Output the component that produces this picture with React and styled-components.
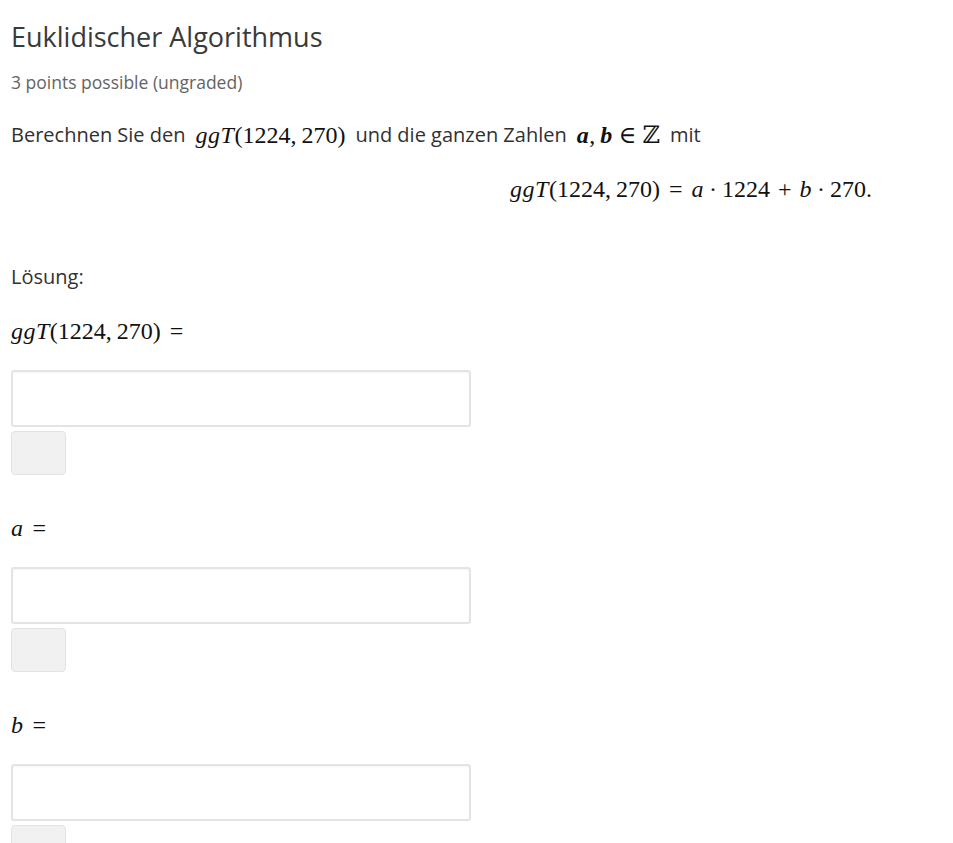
import React from "react";
import styled, { createGlobalStyle } from "styled-components";

const GlobalStyle = createGlobalStyle`
  body {
    margin: 0;
    background: #fff;
    font-family: "Open Sans", "Noto Sans", sans-serif;
    color: #313131;
  }
`;

const Page = styled.div`
  padding: 20px 0 0 11px;
`;

const Title = styled.h2`
  margin: 0;
  font-size: 27px;
  font-weight: 400;
  line-height: 34px;
  color: #3a3a3a;
`;

const Points = styled.div`
  margin-top: 16px;
  font-size: 17.5px;
  line-height: 24px;
  color: #646464;
`;

const Text = styled.p`
  margin: ${(p) => p.margin || "0"};
  font-size: 20px;
  line-height: ${(p) => p.lh || 30}px;
  display: flex;
  align-items: center;
`;

const Math = styled.span`
  font-family: "Liberation Serif", "DejaVu Serif", serif;
  font-size: ${(p) => p.size || 24}px;
  margin: 0 ${(p) => p.gap || 0}px;
  white-space: nowrap;
  color: #111;
`;

const V = styled.i`
  font-style: italic;
  font-weight: ${(p) => (p.bold ? 700 : 400)};
  letter-spacing: 0.5px;
`;

const Op = styled.span`
  margin: 0 ${(p) => p.space || 6}px;
`;

const Comma = styled.span`
  margin-right: 5px;
`;

const Display = styled.div`
  display: flex;
  justify-content: flex-end;
  padding-right: 81px;
  margin-top: 19px;
  line-height: 40px;
`;

const Label = styled.div`
  margin-top: ${(p) => p.top || 0}px;
  height: 40px;
  display: flex;
  align-items: center;
`;

const Field = styled.div`
  margin-top: 19px;
  margin-bottom: 33px;
  display: flex;
  flex-direction: column;
  align-items: flex-start;
`;

const Input = styled.input`
  box-sizing: border-box;
  width: 460px;
  height: 57px;
  border: 2px solid #e4e4e4;
  border-radius: 3px;
  box-shadow: inset 0 1px 2px rgba(0, 0, 0, 0.04);
  background: #fff;
  font-size: 16px;
  padding: 0 10px;
  outline: none;
`;

const CheckButton = styled.button`
  box-sizing: border-box;
  margin-top: 4px;
  width: 55px;
  height: 44px;
  border: 1px solid #e3e3e3;
  border-radius: 4px;
  background: #f1f1f1;
  padding: 0;
`;

const Gcd = () => (
  <>
    <V>ggT</V>(1224<Comma>,</Comma>270)
  </>
);

const answers = [
  { key: "ggt", label: <><Gcd /><Op space={9}>=</Op></>, top: 21 },
  { key: "a", label: <><V>a</V><Op space={9}>=</Op></>, top: 0 },
  { key: "b", label: <><V>b</V><Op space={9}>=</Op></>, top: 0 },
];

export default function App() {
  return (
    <Page>
      <GlobalStyle />
      <Title>Euklidischer Algorithmus</Title>
      <Points>3 points possible (ungraded)</Points>
      <Text margin="26px 0 0 0">
        Berechnen Sie den
        <Math gap={10}>
          <Gcd />
        </Math>
        und die ganzen Zahlen
        <Math gap={10}>
          <V bold>a</V>
          <Comma>,</Comma>
          <V bold>b</V>
          <Op>∈</Op>ℤ
        </Math>
        mit
      </Text>
      <Display>
        <Math>
          <Gcd />
          <Op space={9}>=</Op>
          <V>a</V>
          <Op space={5}>·</Op>1224<Op space={8}>+</Op>
          <V>b</V>
          <Op space={5}>·</Op>270.
        </Math>
      </Display>
      <Text margin="55px 0 0 0" lh={26}>
        Lösung:
      </Text>
      {answers.map((a) => (
        <div key={a.key}>
          <Label top={a.top}>
            <Math>{a.label}</Math>
          </Label>
          <Field>
            <Input type="text" aria-label={a.key} />
            <CheckButton aria-label="check" />
          </Field>
        </div>
      ))}
    </Page>
  );
}
